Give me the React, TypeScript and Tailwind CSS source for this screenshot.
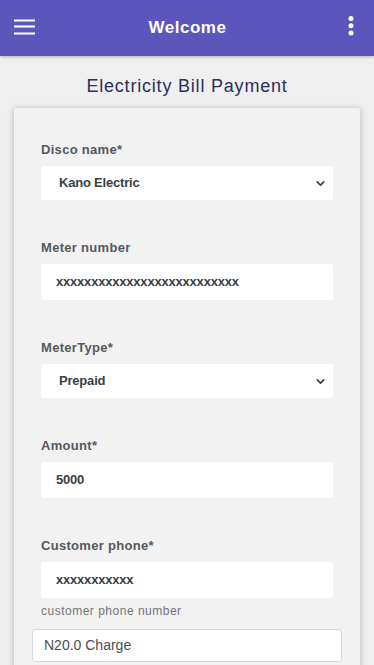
import { ChevronDown } from "lucide-react";

function Label({ children }: { children: React.ReactNode }) {
  return <div className="text-[13px] font-bold text-[#54595f] tracking-[0.3px] mb-[8px] leading-[16px]">{children}</div>;
}

function SelectBox({ value }: { value: string }) {
  return (
    <div className="h-[34px] bg-white rounded-[3px] flex items-center justify-between pl-[18px] pr-[6px]">
      <span className="text-[13px] font-bold tracking-[-0.2px] text-[#3a3f45]">{value}</span>
      <ChevronDown size={13} strokeWidth={3.2} className="text-[#3d4248]" />
    </div>
  );
}

function TextBox({ value }: { value: string }) {
  return (
    <div className="h-[36px] bg-white rounded-[3px] flex items-center pl-[15px]">
      <span className="text-[13px] font-bold tracking-[-0.2px] text-[#3a3f45]">{value}</span>
    </div>
  );
}

export default function App() {
  return (
    <div className="min-h-screen h-[665px] overflow-hidden bg-[#efefef] font-['Liberation_Sans',Arial,sans-serif]">
      <header className="h-[56px] bg-[#5c55bb] flex items-center justify-between px-[14px] shadow-[0_1px_3px_rgba(0,0,0,0.25)] relative z-10">
        <div className="w-[24px]">
          <svg width="22" height="18" viewBox="0 0 22 18">
            <rect x="0" y="0.5" width="21" height="2" fill="#fff" />
            <rect x="0" y="6.5" width="21" height="2" fill="#fff" />
            <rect x="0" y="13.5" width="21" height="2" fill="#fff" />
          </svg>
        </div>
        <h1 className="text-white font-bold text-[17px] tracking-[0.5px]">Welcome</h1>
        <div className="w-[24px] flex justify-end -mr-[1px]">
          <svg width="20" height="24" viewBox="0 0 20 24">
            <circle cx="10" cy="2.5" r="2.5" fill="#fff" />
            <circle cx="10" cy="9.8" r="2.5" fill="#fff" />
            <circle cx="10" cy="17" r="2.5" fill="#fff" />
          </svg>
        </div>
      </header>

      <h2 className="text-center text-[18px] text-[#2c2e5c] tracking-[0.8px] mt-[20px] leading-[20px]">Electricity Bill Payment</h2>

      <div className="mx-[14px] mt-[12px] bg-[#f2f2f2] rounded-[2px] shadow-[0_1px_6px_rgba(0,0,0,0.25)] pt-[34px] px-[27px] pb-[20px]">
        <Label>Disco name*</Label>
        <SelectBox value="Kano Electric" />

        <div className="mt-[40px]">
          <Label>Meter number</Label>
          <TextBox value="xxxxxxxxxxxxxxxxxxxxxxxxxx" />
        </div>

        <div className="mt-[40px]">
          <Label>MeterType*</Label>
          <SelectBox value="Prepaid" />
        </div>

        <div className="mt-[40px]">
          <Label>Amount*</Label>
          <TextBox value="5000" />
        </div>

        <div className="mt-[40px]">
          <Label>Customer phone*</Label>
          <TextBox value="xxxxxxxxxxx" />
          <div className="text-[12px] text-[#72777c] tracking-[0.5px] mt-[6px] leading-[14px]">customer phone number</div>
        </div>

        <div className="-mx-[9px] mt-[11px] h-[33px] bg-white border border-[#d6d9dc] rounded-[3px] flex items-center pl-[11px]">
          <span className="text-[14px] text-[#4a4e52]">N20.0 Charge</span>
        </div>
      </div>
    </div>
  );
}
